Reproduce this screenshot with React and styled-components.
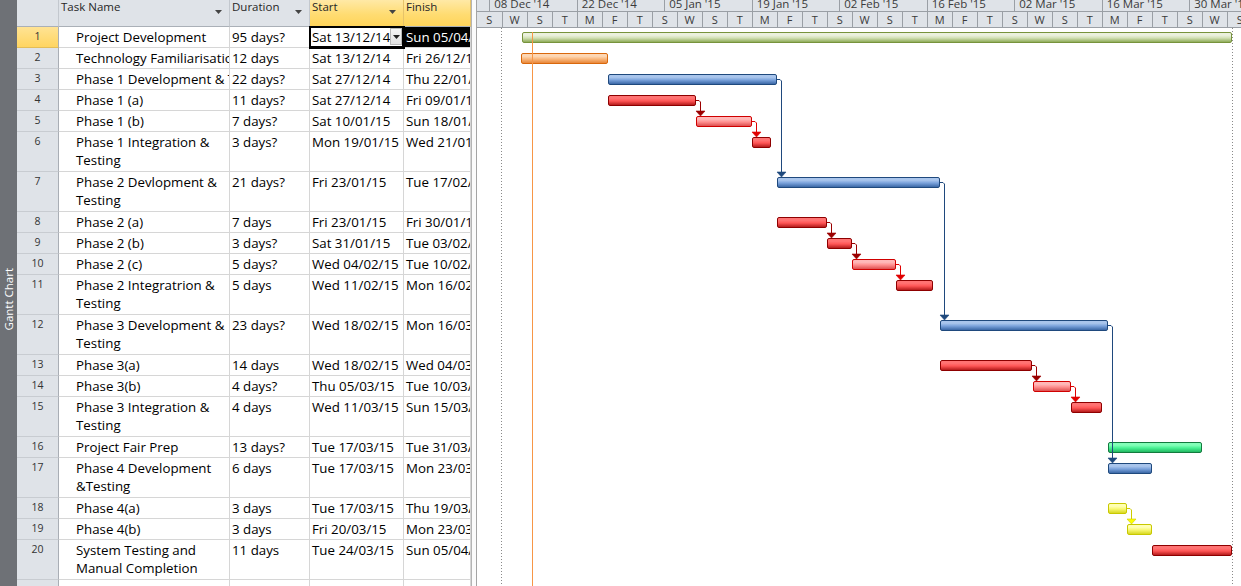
import React from 'react';
import styled, { createGlobalStyle } from 'styled-components';

const GlobalStyle = createGlobalStyle`
  html, body { margin: 0; padding: 0; background: #ffffff; }
  body { font-family: "Open Sans", "Noto Sans", Arial, sans-serif; overflow: hidden; }
`;

const CHART_X = 477;
const CHART_W = 764;

const palette = {
  summary: { border: '#77933c', top: '#ebf1de', mid: '#d3e1b6', bot: '#8eab58', link: '#77933c' },
  orange: { border: '#d9680c', top: '#fdd7b4', mid: '#f9b87e', bot: '#e8873a', link: '#d9680c' },
  blue: { border: '#1f497d', top: '#a9c5ec', mid: '#7ba3dc', bot: '#3b68a6', link: '#1f497d' },
  red: { border: '#8e0000', top: '#ff7373', mid: '#ff5656', bot: '#b51c1c', link: '#9a0000' },
  pink: { border: '#d00000', top: '#ffb8b8', mid: '#ff9090', bot: '#dc5050', link: '#e00000' },
  green: { border: '#127a3e', top: '#82ffb8', mid: '#48f293', bot: '#22b862', link: '#127a3e' },
  yellow: { border: '#c8c800', top: '#ffffb4', mid: '#f8f874', bot: '#d8d822', link: '#cccc00', arrow: '#ffff00' },
};

const tasks = [
  { id: 1, name: ['Project Development'], dur: '95 days?', start: 'Sat 13/12/14', finish: 'Sun 05/04/15', bar: [522, 1232, 'summary'] },
  { id: 2, name: ['Technology Familiarisation'], dur: '12 days', start: 'Sat 13/12/14', finish: 'Fri 26/12/14', bar: [521, 608, 'orange'] },
  { id: 3, name: ['Phase 1 Development & Testing'], dur: '22 days?', start: 'Sat 27/12/14', finish: 'Thu 22/01/15', bar: [608, 777, 'blue'] },
  { id: 4, name: ['Phase 1 (a)'], dur: '11 days?', start: 'Sat 27/12/14', finish: 'Fri 09/01/15', bar: [608, 696, 'red'] },
  { id: 5, name: ['Phase 1 (b)'], dur: '7 days?', start: 'Sat 10/01/15', finish: 'Sun 18/01/15', bar: [696, 752, 'pink'] },
  { id: 6, name: ['Phase 1 Integration &', 'Testing'], dur: '3 days?', start: 'Mon 19/01/15', finish: 'Wed 21/01/15', bar: [752, 771, 'red'] },
  { id: 7, name: ['Phase 2 Devlopment &', 'Testing'], dur: '21 days?', start: 'Fri 23/01/15', finish: 'Tue 17/02/15', bar: [777, 940, 'blue'] },
  { id: 8, name: ['Phase 2 (a)'], dur: '7 days', start: 'Fri 23/01/15', finish: 'Fri 30/01/15', bar: [777, 827, 'red'] },
  { id: 9, name: ['Phase 2 (b)'], dur: '3 days?', start: 'Sat 31/01/15', finish: 'Tue 03/02/15', bar: [827, 852, 'red'] },
  { id: 10, name: ['Phase 2 (c)'], dur: '5 days?', start: 'Wed 04/02/15', finish: 'Tue 10/02/15', bar: [852, 896, 'pink'] },
  { id: 11, name: ['Phase 2 Integratrion &', 'Testing'], dur: '5 days', start: 'Wed 11/02/15', finish: 'Mon 16/02/15', bar: [896, 933, 'red'] },
  { id: 12, name: ['Phase 3 Development &', 'Testing'], dur: '23 days?', start: 'Wed 18/02/15', finish: 'Mon 16/03/15', bar: [940, 1108, 'blue'] },
  { id: 13, name: ['Phase 3(a)'], dur: '14 days', start: 'Wed 18/02/15', finish: 'Wed 04/03/15', bar: [940, 1032, 'red'] },
  { id: 14, name: ['Phase 3(b)'], dur: '4 days?', start: 'Thu 05/03/15', finish: 'Tue 10/03/15', bar: [1033, 1071, 'pink'] },
  { id: 15, name: ['Phase 3 Integration &', 'Testing'], dur: '4 days', start: 'Wed 11/03/15', finish: 'Sun 15/03/15', bar: [1071, 1102, 'red'] },
  { id: 16, name: ['Project Fair Prep'], dur: '13 days?', start: 'Tue 17/03/15', finish: 'Tue 31/03/15', bar: [1108, 1202, 'green'] },
  { id: 17, name: ['Phase 4 Development', '&Testing'], dur: '6 days', start: 'Tue 17/03/15', finish: 'Mon 23/03/15', bar: [1108, 1152, 'blue'] },
  { id: 18, name: ['Phase 4(a)'], dur: '3 days', start: 'Tue 17/03/15', finish: 'Thu 19/03/15', bar: [1108, 1127, 'yellow'] },
  { id: 19, name: ['Phase 4(b)'], dur: '3 days', start: 'Fri 20/03/15', finish: 'Mon 23/03/15', bar: [1127, 1152, 'yellow'] },
  { id: 20, name: ['System Testing and', 'Manual Completion'], dur: '11 days', start: 'Tue 24/03/15', finish: 'Sun 05/04/15', bar: [1152, 1232, 'red'] },
];

const links = [[3, 7], [4, 5], [5, 6], [7, 12], [8, 9], [9, 10], [10, 11], [12, 17], [13, 14], [14, 15], [18, 19]];

const weeks = ["08 Dec '14", "22 Dec '14", "05 Jan '15", "19 Jan '15", "02 Feb '15", "16 Feb '15", "02 Mar '15", "16 Mar '15", "30 Mar '15"];
const dayCycle = ['S', 'W', 'S', 'T', 'M', 'F', 'T'];
const days = Array.from({ length: 31 }, (_, i) => dayCycle[i % 7]);

const rowHeight = (t) => (t.name.length > 1 ? 40 : 21);
const rowTops = [];
{
  let y = 0;
  tasks.forEach((t) => { rowTops.push(y); y += rowHeight(t); });
}
const BODY_H = tasks.reduce((s, t) => s + rowHeight(t), 0) + 21;

/* ---------- layout ---------- */
const Screen = styled.div`
  display: flex;
  width: 1241px;
  height: 586px;
  overflow: hidden;
  background: #ffffff;
`;

const ViewBar = styled.div`
  flex: 0 0 17px;
  background: #6e7176;
  display: flex;
  align-items: center;
  justify-content: center;
`;

const ViewLabel = styled.span`
  writing-mode: vertical-rl;
  transform: rotate(180deg);
  color: #ffffff;
  font-size: 11.5px;
  white-space: nowrap;
  margin-top: 12px;
`;

const Table = styled.div`
  flex: 0 0 454px;
  display: flex;
  flex-direction: column;
  overflow: hidden;
`;

const COLS = '42px 171px 80px 94px 67px';

const HeaderRow = styled.div`
  display: grid;
  grid-template-columns: ${COLS};
  height: 27px;
  flex: 0 0 27px;
`;

const HeadCell = styled.div`
  box-sizing: border-box;
  display: flex;
  justify-content: space-between;
  align-items: flex-start;
  padding-left: 2px;
  padding-top: 1px;
  background: ${(p) => (p.$active ? 'linear-gradient(to bottom, #ffe9a6 0%, #ffdc72 55%, #ffd45a 100%)' : '#dfe3e8')};
  border-right: 1px solid ${(p) => (p.$active ? '#e6c36a' : '#c3c8ce')};
  border-bottom: 1px solid #aab0b7;
  font-size: 11.5px;
  line-height: 11px;
  color: #262626;
  white-space: nowrap;
  overflow: hidden;
`;

const Caret = styled.svg`
  flex: 0 0 auto;
  margin-top: 9px;
  margin-right: 7px;
`;

const DropCaret = () => (
  <Caret width="7" height="4" viewBox="0 0 7 4">
    <polygon points="0,0 7,0 3.5,4" fill="#444" />
  </Caret>
);

const Row = styled.div`
  display: grid;
  grid-template-columns: ${COLS};
  height: ${(p) => p.$h}px;
  flex: 0 0 ${(p) => p.$h}px;
`;

const NumCell = styled.div`
  box-sizing: border-box;
  background: ${(p) => (p.$active ? 'linear-gradient(to bottom, #ffe394 0%, #ffd561 100%)' : '#dfe3e8')};
  border-right: 1px solid #a9aeb5;
  border-bottom: 1px solid ${(p) => (p.$active ? '#e3bd58' : '#c8ccd1')};
  text-align: center;
  font-size: 10.5px;
  line-height: 14px;
  padding-top: 2px;
  color: #333;
`;

const Cell = styled.div`
  box-sizing: border-box;
  border-right: 1px solid #d6d6d6;
  border-bottom: 1px solid #d6d6d6;
  padding-left: ${(p) => p.$indent || 2}px;
  padding-top: 1px;
  font-size: 13.3px;
  line-height: 18px;
  color: ${(p) => (p.$inverse ? '#ffffff' : '#000000')};
  background: ${(p) => (p.$inverse ? '#000000' : '#ffffff')};
  white-space: nowrap;
  overflow: hidden;
`;

const SelectedCell = styled(Cell)`
  position: relative;
  z-index: 1;
  display: flex;
  justify-content: space-between;
  align-items: flex-start;
  padding-top: 0;
  border-color: #000;
  box-shadow: 0 0 0 1px #000, inset 0 0 0 1px #000;
`;

const CellText = styled.span`
  overflow: hidden;
  white-space: nowrap;
  padding-top: 1px;
`;

const DropButton = styled.span`
  flex: 0 0 12px;
  height: 17px;
  margin-top: 1px;
  margin-right: 1px;
  box-sizing: border-box;
  border: 1px solid #b9b9b9;
  background: linear-gradient(to bottom, #f6f6f6 0%, #e2e2e2 100%);
  display: flex;
  align-items: center;
  justify-content: center;
`;

const Splitter = styled.div`
  flex: 0 0 6px;
  box-sizing: border-box;
  border-left: 1px solid #b4b4b4;
  border-right: 1px solid #a4a4a4;
  background: #fbfbfb;
`;

const Chart = styled.div`
  flex: 0 0 ${CHART_W}px;
  display: flex;
  flex-direction: column;
  overflow: hidden;
`;

const Tier = styled.div`
  display: flex;
  height: ${(p) => p.$h}px;
  flex: 0 0 ${(p) => p.$h}px;
  background: #dfe3e8;
  border-bottom: 1px solid #9a9fa5;
  overflow: hidden;
`;

const WeekCell = styled.div`
  box-sizing: border-box;
  flex: 0 0 ${(p) => p.$w}px;
  border-left: ${(p) => (p.$first ? 'none' : '1px solid #9a9fa5')};
  padding-left: 4px;
  font-size: 11.5px;
  line-height: 8px;
  color: #3a3a3a;
  white-space: nowrap;
  overflow: hidden;
`;

const DayCell = styled.div`
  box-sizing: border-box;
  flex: 0 0 ${(p) => p.$w}px;
  border-left: ${(p) => (p.$first ? 'none' : '1px solid #9a9fa5')};
  text-align: center;
  font-size: 11px;
  line-height: 15px;
  color: #3a3a3a;
`;

const ChartBody = styled.div`
  position: relative;
  flex: 1 1 auto;
  display: flex;
  flex-direction: column;
`;

const ChartRow = styled.div`
  position: relative;
  height: ${(p) => p.$h}px;
  flex: 0 0 ${(p) => p.$h}px;
`;

const Bar = styled.div`
  position: absolute;
  top: 4px;
  height: 11px;
  box-sizing: border-box;
  border: 1px solid ${(p) => p.$c.border};
  border-radius: 2px;
  background: linear-gradient(
    to bottom,
    ${(p) => p.$c.top} 0%,
    ${(p) => p.$c.top} 25%,
    ${(p) => p.$c.mid} 55%,
    ${(p) => p.$c.bot} 100%
  );
`;

const Overlay = styled.svg`
  position: absolute;
  top: 0;
  left: 0;
  pointer-events: none;
  overflow: visible;
`;

function LinkPath({ from, to }) {
  const src = tasks[from - 1];
  const c = palette[src.bar[2]];
  const x1 = src.bar[1] - CHART_X;
  const y = rowTops[from - 1] + 9.5;
  const vx = Math.round(x1 + 4) + 0.5;
  const tTop = rowTops[to - 1] + 4;
  return (
    <g>
      <path
        d={`M ${x1} ${y} H ${vx - 1.5} L ${vx} ${y + 1.5} V ${tTop - 4}`}
        fill="none"
        stroke={c.link}
        strokeWidth="1"
      />
      <polygon
        points={`${vx - 4.5},${tTop - 5} ${vx + 4.5},${tTop - 5} ${vx},${tTop}`}
        fill={c.arrow || c.link}
        stroke={c.link}
        strokeWidth="0.6"
      />
    </g>
  );
}

export default function App() {
  return (
    <>
      <GlobalStyle />
      <Screen>
        <ViewBar>
          <ViewLabel>Gantt Chart</ViewLabel>
        </ViewBar>

        <Table>
          <HeaderRow>
            <HeadCell />
            <HeadCell>Task Name<DropCaret /></HeadCell>
            <HeadCell>Duration<DropCaret /></HeadCell>
            <HeadCell $active>Start<DropCaret /></HeadCell>
            <HeadCell $active>Finish</HeadCell>
          </HeaderRow>
          {tasks.map((t) => {
            const first = t.id === 1;
            return (
              <Row key={t.id} $h={rowHeight(t)}>
                <NumCell $active={first}>{t.id}</NumCell>
                <Cell $indent={17}>
                  {t.name.map((line, i) => (
                    <React.Fragment key={i}>
                      {i > 0 && <br />}
                      {line}
                    </React.Fragment>
                  ))}
                </Cell>
                <Cell>{t.dur}</Cell>
                {first ? (
                  <SelectedCell>
                    <CellText>{t.start}</CellText>
                    <DropButton>
                      <svg width="7" height="4" viewBox="0 0 7 4">
                        <polygon points="0,0 7,0 3.5,4" fill="#222" />
                      </svg>
                    </DropButton>
                  </SelectedCell>
                ) : (
                  <Cell>{t.start}</Cell>
                )}
                <Cell $inverse={first}>{t.finish}</Cell>
              </Row>
            );
          })}
          <Row $h={21}>
            <NumCell />
            <Cell />
            <Cell />
            <Cell />
            <Cell />
          </Row>
        </Table>

        <Splitter />

        <Chart>
          <Tier $h={11}>
            <WeekCell $first $w={12.2} />
            {weeks.map((w) => (
              <WeekCell key={w} $w={87.5}>{w}</WeekCell>
            ))}
          </Tier>
          <Tier $h={15}>
            {days.map((d, i) => (
              <DayCell key={i} $first={i === 0} $w={i === 0 ? 24.7 : 25}>{d}</DayCell>
            ))}
          </Tier>
          <ChartBody>
            {tasks.map((t) => {
              const [x0, x1, kind] = t.bar;
              return (
                <ChartRow key={t.id} $h={rowHeight(t)}>
                  <Bar $c={palette[kind]} style={{ left: x0 - CHART_X, width: x1 - x0 }} />
                </ChartRow>
              );
            })}
            <Overlay width={CHART_W} height={BODY_H} viewBox={`0 0 ${CHART_W} ${BODY_H}`}>
              <line x1="24.5" y1="0" x2="24.5" y2={BODY_H} stroke="#8a8a8a" strokeDasharray="1 2" />
              <line x1="755.5" y1="0" x2="755.5" y2={BODY_H} stroke="#8a8a8a" strokeDasharray="1 2" />
              {links.map(([a, b]) => (
                <LinkPath key={`${a}-${b}`} from={a} to={b} />
              ))}
              <line x1="55.5" y1="4" x2="55.5" y2={BODY_H} stroke="#f79646" strokeWidth="1" />
            </Overlay>
          </ChartBody>
        </Chart>
      </Screen>
    </>
  );
}
